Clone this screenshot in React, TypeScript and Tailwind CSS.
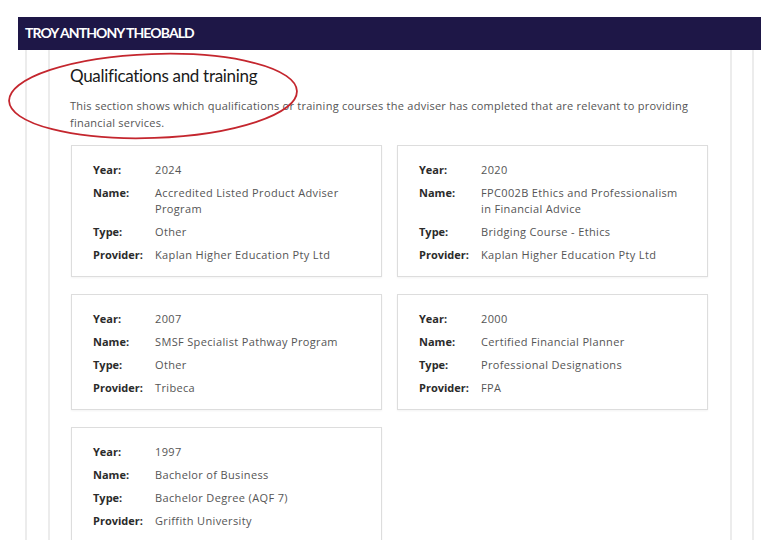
import React from "react";

type Q = { year: string; name: string; type: string; provider: string };

const items: Q[] = [
  { year: "2024", name: "Accredited Listed Product Adviser Program", type: "Other", provider: "Kaplan Higher Education Pty Ltd" },
  { year: "2020", name: "FPC002B Ethics and Professionalism in Financial Advice", type: "Bridging Course - Ethics", provider: "Kaplan Higher Education Pty Ltd" },
  { year: "2007", name: "SMSF Specialist Pathway Program", type: "Other", provider: "Tribeca" },
  { year: "2000", name: "Certified Financial Planner", type: "Professional Designations", provider: "FPA" },
  { year: "1997", name: "Bachelor of Business", type: "Bachelor Degree (AQF 7)", provider: "Griffith University" },
];

function Row({ label, value }: { label: string; value: string }) {
  return (
    <div className="flex">
      <div className="w-[62px] shrink-0 font-bold text-[#2b2b2b] leading-[17px]">{label}</div>
      <div className="w-[205px] text-[#555555] tracking-[0.35px] leading-[16px] pt-[1px]">{value}</div>
    </div>
  );
}

function Card({ q }: { q: Q }) {
  return (
    <div className="border border-[#dddddd] bg-white px-[21px] pt-[15px] pb-[13px] flex flex-col gap-[6px] shadow-[0_1px_2px_rgba(0,0,0,0.05)]">
      <Row label="Year:" value={q.year} />
      <Row label="Name:" value={q.name} />
      <Row label="Type:" value={q.type} />
      <Row label="Provider:" value={q.provider} />
    </div>
  );
}

export default function App() {
  return (
    <div className="relative w-[772px] h-[560px] bg-white overflow-hidden" style={{ fontFamily: '"Open Sans", "Noto Sans", sans-serif' }}>
      <div className="pt-[17px] pl-[18px]">
        <div className="w-[743px] h-[33px] bg-[#1e1747] flex items-center pl-[7px]">
          <span className="text-white font-bold text-[14px] tracking-[-0.9px] leading-[14px] -mt-[1px]" style={{ fontFamily: 'Lato, sans-serif' }}>
            TROY ANTHONY THEOBALD
          </span>
        </div>
      </div>
      <div className="ml-[25px] w-[729px] h-[490px] border-x-2 border-[#ececec] overflow-hidden">
        <div className="ml-[21px] w-[684px] h-full border-x-2 border-[#ececec] pl-[20px] pr-[22px] pt-[15px]">
          <h2 className="text-[17px] leading-[22px] text-[#1a1a1a] tracking-[-0.3px]" style={{ fontFamily: 'Lato, sans-serif' }}>
            Qualifications and training
          </h2>
          <p className="mt-[10px] text-[11px] leading-[17px] text-[#555555] tracking-[0.25px] w-[640px]">
            This section shows which qualifications or training courses the adviser has completed that are relevant to providing financial services.
          </p>
          <div className="mt-[14px] ml-[1px] grid grid-cols-[311px_311px] gap-x-[15px] gap-y-[17px] items-start text-[11px]">
            {items.map((q, i) => (
              <Card key={i} q={q} />
            ))}
          </div>
        </div>
      </div>
      <svg className="absolute left-0 top-0 pointer-events-none" width="772" height="560">
        <ellipse cx="153" cy="96" rx="144" ry="42" fill="none" stroke="#c4262e" strokeWidth="1.8" transform="rotate(-2 153 96)" />
      </svg>
    </div>
  );
}
